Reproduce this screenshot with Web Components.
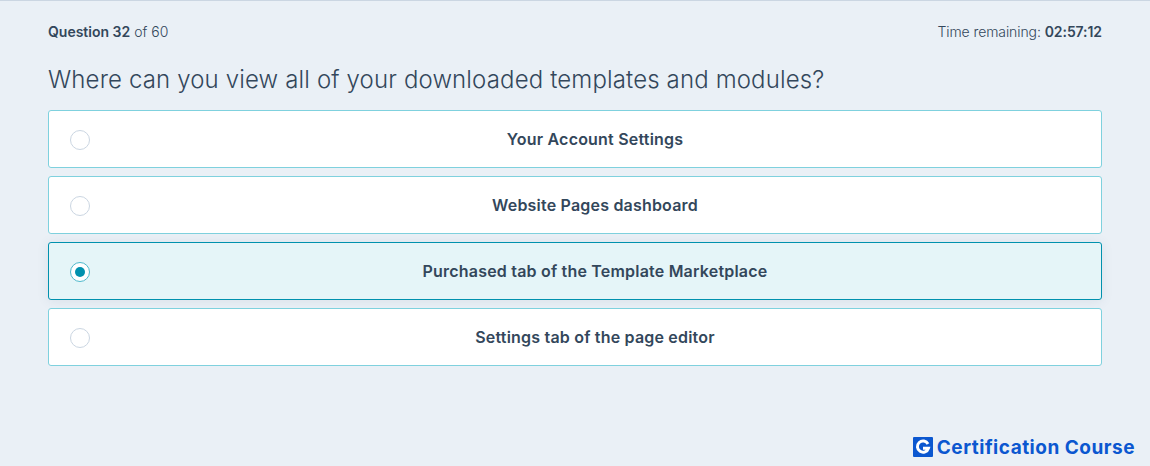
<!DOCTYPE html>
<html lang="en">
<head>
<meta charset="utf-8">
<title>Certification exam</title>
<style>
  html, body { margin: 0; height: 100%; }
  body { background: #eaf0f6; font-family: "Inter", "Liberation Sans", sans-serif; color: #33475b; overflow: hidden; }
</style>
</head>
<body>
<exam-page>
  <exam-header slot="header" current="32" total="60" time="02:57:12"></exam-header>
  <h-question slot="question">Where can you view all of your downloaded templates and modules?</h-question>
  <answer-option slot="options">Your Account Settings</answer-option>
  <answer-option slot="options">Website Pages dashboard</answer-option>
  <answer-option slot="options" selected>Purchased tab of the Template Marketplace</answer-option>
  <answer-option slot="options">Settings tab of the page editor</answer-option>
  <course-logo slot="logo">Certification Course</course-logo>
</exam-page>

<script>
class ExamPage extends HTMLElement {
  connectedCallback() {
    this.attachShadow({ mode: 'open' });
    this.shadowRoot.innerHTML = `
      <style>
        :host { display: flex; flex-direction: column; box-sizing: border-box; height: 466px; border-top: 1px solid #cbd6e2; padding: 0 48px; }
        .options { display: flex; flex-direction: column; gap: 8px; }
        .foot { margin-top: auto; display: flex; justify-content: flex-end; margin-right: -33px; padding-bottom: 9px; }
      </style>
      <slot name="header"></slot>
      <slot name="question"></slot>
      <div class="options"><slot name="options"></slot></div>
      <div class="foot"><slot name="logo"></slot></div>`;
  }
}

class ExamHeader extends HTMLElement {
  connectedCallback() {
    this.attachShadow({ mode: 'open' });
    const current = this.getAttribute('current');
    const total = this.getAttribute('total');
    const time = this.getAttribute('time');
    this.shadowRoot.innerHTML = `
      <style>
        :host { display: flex; justify-content: space-between; align-items: center; height: 20px; margin-top: 21px; font-size: 14px; line-height: 20px; font-weight: 300; }
        b { font-weight: 600; }
        .time { letter-spacing: -.08px; }
      </style>
      <span><b>Question ${current}</b> of ${total}</span>
      <span class="time">Time remaining: <b>${time}</b></span>`;
  }
}

class HQuestion extends HTMLElement {
  connectedCallback() {
    this.attachShadow({ mode: 'open' });
    this.shadowRoot.innerHTML = `
      <style>
        :host { display: block; margin-top: 18px; margin-bottom: 10px; font-size: 24px; line-height: 40px; font-weight: 300; letter-spacing: .14px; }
      </style>
      <slot></slot>`;
  }
}

class AnswerOption extends HTMLElement {
  connectedCallback() {
    this.attachShadow({ mode: 'open' });
    this.shadowRoot.innerHTML = `
      <style>
        :host { display: block; }
        .card { position: relative; display: flex; align-items: center; justify-content: center; box-sizing: border-box; height: 58px; padding-left: 40px; background: #fff; border: 1px solid #7fd1de; border-radius: 3px; font-size: 16px; font-weight: 600; letter-spacing: .2px; }
        .radio { position: absolute; left: 21px; top: 19px; box-sizing: border-box; width: 20px; height: 20px; border: 1px solid #cbd6e2; border-radius: 50%; background: #fff; }
        :host([selected]) .card { background: #e5f5f8; border-color: #0091ae; box-shadow: 0 1px 12px rgba(66,91,118,.1); }
        :host([selected]) .radio { border-color: #4fb9cc; }
        :host([selected]) .radio::after { content: ""; position: absolute; left: 4px; top: 4px; width: 10px; height: 10px; border-radius: 50%; background: #0091ae; }
      </style>
      <div class="card"><span class="radio"></span><span><slot></slot></span></div>`;
  }
}

class CourseLogo extends HTMLElement {
  connectedCallback() {
    this.attachShadow({ mode: 'open' });
    this.shadowRoot.innerHTML = `
      <style>
        :host { display: inline-flex; align-items: center; gap: 4px; color: #0b57d0; font: 700 19px/20px "Inter", "Liberation Sans", sans-serif; letter-spacing: .5px; }
        span { position: relative; top: 1px; }
        svg { display: block; }
      </style>
      <svg width="20" height="20" viewBox="0 0 20 20" aria-hidden="true">
        <rect width="20" height="20" rx="1" fill="#0b57d0"/>
        <path d="M15 7A5.6 5.6 0 1 0 15.4 11.2H10" fill="none" stroke="#fff" stroke-width="3"/>
      </svg>
      <span><slot></slot></span>`;
  }
}

customElements.define('exam-page', ExamPage);
customElements.define('exam-header', ExamHeader);
customElements.define('h-question', HQuestion);
customElements.define('answer-option', AnswerOption);
customElements.define('course-logo', CourseLogo);
</script>
</body>
</html>
